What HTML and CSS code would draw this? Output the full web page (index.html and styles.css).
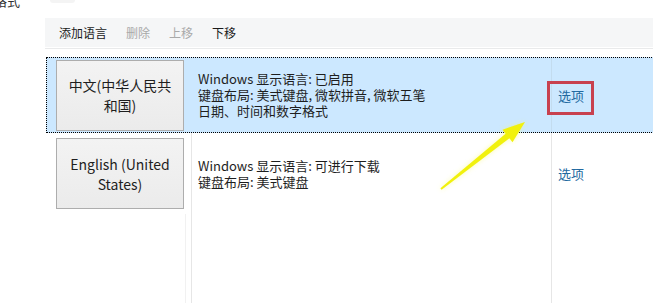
FILE: index.html
```html
<!DOCTYPE html>
<html lang="zh-CN">
<head>
<meta charset="utf-8">
<title>语言</title>
<link rel="stylesheet" href="styles.css">
</head>
<body>
<div class="page">
  <div class="top">
    <span class="top-text">格式</span>
    <span class="top-ghost"></span>
  </div>
  <div class="toolbar">
    <span class="tool">添加语言</span>
    <span class="tool disabled">删除</span>
    <span class="tool disabled">上移</span>
    <span class="tool">下移</span>
  </div>
  <div class="sep"></div>
  <div class="list">
    <div class="row selected">
      <div class="cell c1"><button class="lang">中文(中华人民共和国)</button></div>
      <div class="cell c2">
        <div class="details">
          <div>Windows 显示语言: 已启用</div>
          <div>键盘布局: 美式键盘, 微软拼音, 微软五笔</div>
          <div>日期、时间和数字格式</div>
        </div>
      </div>
      <div class="cell c3"><a class="opt marked">选项</a></div>
    </div>
    <div class="row second">
      <div class="cell c1"><button class="lang">English (United States)</button></div>
      <div class="cell c2">
        <div class="details">
          <div>Windows 显示语言: 可进行下载</div>
          <div>键盘布局: 美式键盘</div>
        </div>
      </div>
      <div class="cell c3"><a class="opt">选项</a></div>
    </div>
    <div class="row filler">
      <div class="cell c1"><span class="inner-line"></span></div>
      <div class="cell c2"></div>
      <div class="cell c3"></div>
    </div>
  </div>
  <svg class="arrow" width="653" height="304" viewBox="0 0 653 304">
    <defs>
      <filter id="soft" x="-20%" y="-20%" width="140%" height="140%">
        <feGaussianBlur stdDeviation="0.7"/>
      </filter>
      <filter id="glow" x="-20%" y="-20%" width="140%" height="140%">
        <feGaussianBlur stdDeviation="2.5"/>
      </filter>
    </defs>
    <polygon filter="url(#glow)" fill="#f6f66a" opacity="0.5"
      points="440.4,188.2 505.6,133.7 502.5,129.7 525,122 512.5,142.3 509.4,138.3 441.6,189.8"/>
    <polygon filter="url(#soft)" fill="#f1f10c"
      points="440.4,188.2 505.6,133.7 502.5,129.7 525,122 512.5,142.3 509.4,138.3 441.6,189.8"/>
  </svg>
</div>
</body>
</html>
```
FILE: styles.css
```css
* { box-sizing: border-box; }
html, body {
  margin: 0;
  padding: 0;
  background: #ffffff;
}
body {
  width: 653px;
  height: 304px;
  overflow: hidden;
  font-family: "Noto Sans CJK SC", "Noto Sans", sans-serif;
  color: #1e1e1e;
}
.page {
  position: relative;
  width: 653px;
  height: 304px;
  display: flex;
  flex-direction: column;
}
.top {
  height: 18px;
  display: flex;
  align-items: flex-start;
  overflow: hidden;
}
.top-text {
  display: block;
  flex: none;
  width: 20px;
  margin: -7px 0 0 -6px;
  font-size: 13px;
  line-height: 16px;
  color: #333;
  white-space: nowrap;
}
.top-ghost {
  display: block;
  flex: none;
  margin-left: 36px;
  width: 25px;
  height: 3px;
  background: #f4f4f4;
  border-radius: 0 0 6px 6px;
}
.toolbar {
  margin-left: 45px;
  height: 29px;
  background: #f5f6f7;
  display: flex;
  align-items: center;
  gap: 19px;
  padding-left: 14px;
  font-size: 12px;
  line-height: 16px;
}
.tool { color: #1a1a1a; }
.tool.disabled { color: #a9a9a9; }
.sep {
  margin: 1px 0 8px 45px;
  height: 1px;
  background: #e9eaeb;
}
.list {
  margin-left: 46px;
  width: 640px;
  flex: 1;
  display: flex;
  flex-direction: column;
}
.row {
  display: grid;
  grid-template-columns: 145px 360px 1fr;
  border: 1px solid transparent;
  border-right: none;
}
.row.selected {
  height: 76px;
  background: #cce8ff;
  border: 1px dotted #000;
  border-right: none;
}
.row.second {
  height: 81px;
  border-top: none;
  border-bottom: none;
}
.row.filler {
  flex: 1;
  border-top: none;
}
.cell {
  display: flex;
  align-items: center;
  min-width: 0;
}
.c1 {
  padding-left: 9px;
  border-right: 1px solid #e6e6e6;
  position: relative;
}
.c2 {
  padding-left: 6px;
  border-right: 1px solid #e6e6e6;
}
.c3 { padding-left: 5px; }
.selected .c1 { border-right-color: transparent; }
.selected .c2 { border-right-color: #c3dcef; }
.inner-line {
  position: absolute;
  top: 0;
  bottom: 0;
  right: 5px;
  width: 1px;
  background: #f1f1f1;
}
.lang {
  width: 128px;
  height: 71px;
  padding: 0 9px;
  border: 1px solid #adadad;
  background: linear-gradient(#f3f3f3, #ebebeb);
  font-family: "Noto Sans CJK SC", "Noto Sans", sans-serif;
  font-size: 14px;
  line-height: 20px;
  color: #1e1e1e;
  text-align: center;
  border-radius: 0;
}
.details {
  font-size: 13px;
  line-height: 16px;
  color: #1e1e1e;
  white-space: nowrap;
}
.opt {
  position: relative;
  display: inline-block;
  font-size: 13px;
  line-height: 17px;
  color: #2269a0;
  padding-left: 1px;
}
.opt.marked::after {
  content: "";
  position: absolute;
  left: -10px;
  right: -10px;
  top: -6px;
  bottom: -11px;
  border: 3px solid #c8414f;
}
.arrow {
  position: absolute;
  left: 0;
  top: 0;
  pointer-events: none;
}
```
